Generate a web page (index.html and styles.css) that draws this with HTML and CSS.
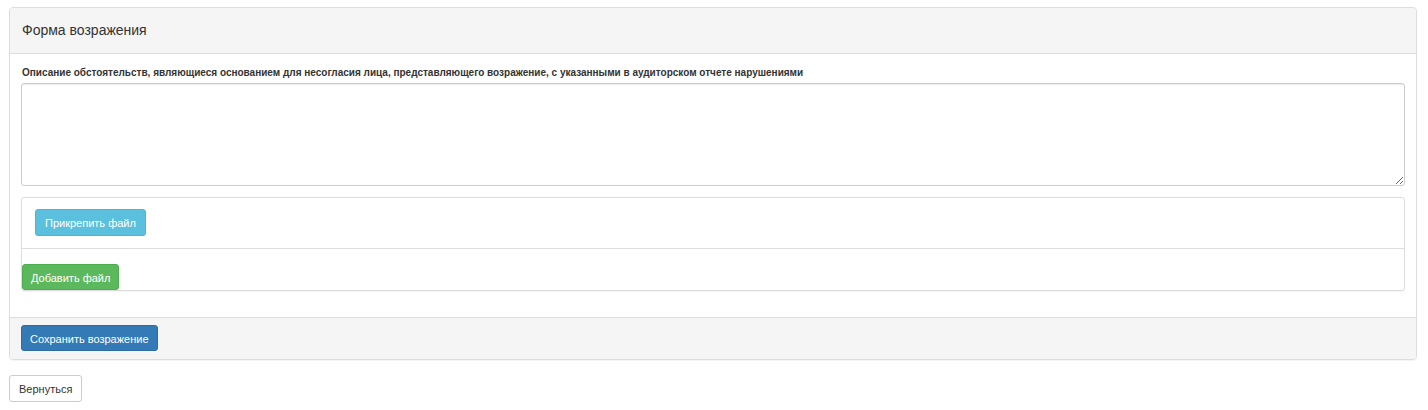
FILE: index.html
```html
<html>
	<head>
		<title>Форма возражения</title>
		<link rel="stylesheet" href="styles.css">
	</head>
	<body>
		<div class="panel">
			<div class="panel-heading">
				<h3 class="panel-title">Форма возражения</h3>
			</div>
			<div class="panel-body">
				<label class="field-label" for="reason">Описание обстоятельств, являющиеся основанием для несогласия лица, представляющего возражение, с указанными в аудиторском отчете нарушениями</label>
				<textarea id="reason" class="form-control"></textarea>
				<div class="files">
					<div class="file-row">
						<button type="button" class="btn btn-info">Прикрепить файл</button>
					</div>
					<button type="button" class="btn btn-success">Добавить файл</button>
				</div>
			</div>
			<div class="panel-footer">
				<button type="button" class="btn btn-primary">Сохранить возражение</button>
			</div>
		</div>
		<button type="button" class="btn btn-default">Вернуться</button>
	</body>
</html>
```

FILE: styles.css
```css
* {
	box-sizing: border-box;
}
body {
	margin: 7px 11px 0 9px;
	font-family: "Liberation Sans", Arial, sans-serif;
	font-size: 12px;
	color: #333333;
	background: #ffffff;
}
.panel {
	border: 1px solid #dddddd;
	border-radius: 4px;
	box-shadow: 0 1px 1px rgba(0, 0, 0, .05);
	margin-bottom: 15px;
}
.panel-heading {
	background-color: #f5f5f5;
	border-bottom: 1px solid #dddddd;
	border-radius: 3px 3px 0 0;
	padding: 13px 12px 14px;
}
.panel-title {
	margin: 0;
	font-size: 14px;
	font-weight: normal;
	line-height: 18px;
}
.panel-body {
	padding: 12px 11px 26px;
}
.field-label {
	display: block;
	font-size: 10px;
	font-weight: bold;
	line-height: 13px;
	margin: 0 0 4px 1px;
}
.form-control {
	display: block;
	width: 100%;
	height: 103px;
	border: 1px solid #cccccc;
	border-radius: 3px;
	box-shadow: inset 0 1px 1px rgba(0, 0, 0, .075);
	padding: 6px 10px;
	font-family: inherit;
	font-size: 12px;
	margin: 0;
}
.files {
	margin-top: 11px;
	border: 1px solid #dddddd;
	border-radius: 3px;
	box-shadow: 0 1px 1px rgba(0, 0, 0, .05);
}
.file-row {
	border-bottom: 1px solid #dddddd;
	padding: 11px 13px 12px;
	margin-bottom: 15px;
}
.btn {
	display: inline-block;
	font-family: inherit;
	font-size: 11px;
	line-height: 14px;
	padding: 6px 8px;
	border: 1px solid transparent;
	border-radius: 3px;
	color: #ffffff;
	cursor: pointer;
}
.btn-info {
	background-color: #5bc0de;
	border-color: #46b8da;
	height: 27px;
	padding: 6px 9px;
}
.btn-success {
	background-color: #5cb85c;
	border-color: #4cae4c;
	height: 26px;
	margin-left: 0;
	display: block;
}
.btn-primary {
	background-color: #337ab7;
	border-color: #2e6da4;
	height: 26px;
}
.panel-footer {
	background-color: #f5f5f5;
	border-top: 1px solid #dddddd;
	border-radius: 0 0 3px 3px;
	padding: 7px 11px 8px;
}
.btn-default {
	background-color: #ffffff;
	border-color: #cccccc;
	color: #333333;
	height: 27px;
	padding: 6px 9px;
}
```
